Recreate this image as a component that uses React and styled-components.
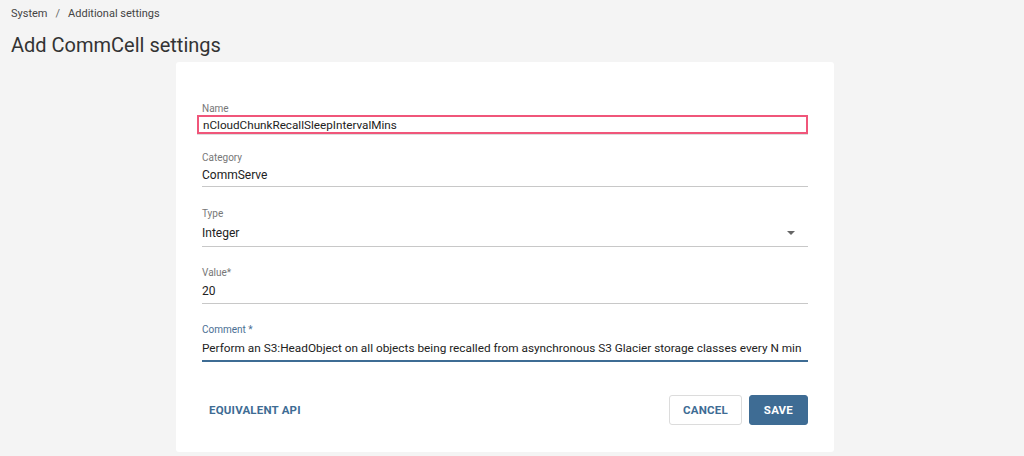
import React from "react";
import styled, { createGlobalStyle } from "styled-components";

const Global = createGlobalStyle`
  html, body { margin: 0; padding: 0; background: #f4f4f4; }
  body { font-family: Roboto, "Liberation Sans", sans-serif; color: #333; }
  * { box-sizing: border-box; }
`;

const Page = styled.div`
  width: 1024px;
  height: 456px;
  overflow: hidden;
  background: #f4f4f4;
  padding: 7px 0 0 11px;
`;

const Crumbs = styled.div`
  font-size: 11px;
  line-height: 14px;
  color: #444;
  span { margin: 0 8px; color: #666; }
`;

const Title = styled.h1`
  margin: 12px 0 0;
  font-size: 20px;
  font-weight: 400;
  line-height: 24px;
  color: #333;
`;

const Card = styled.div`
  margin: 5px 0 0 165px;
  width: 658px;
  height: 390px;
  background: #fff;
  border-radius: 3px;
  padding: 40px 26px 0 26px;
`;

const Field = styled.div`
  margin-bottom: ${p => p.$gap || 19}px;
`;

const Label = styled.div`
  font-size: 10px;
  line-height: 14px;
  color: ${p => (p.$focus ? "#4a6f93" : "#777")};
`;

const Input = styled.div`
  height: ${p => p.$h || 22}px;
  display: flex;
  align-items: center;
  justify-content: space-between;
  font-size: ${p => p.$fs || 12}px;
  color: #222;
  white-space: nowrap;
  overflow: hidden;
  border-bottom: ${p => (p.$focus ? "2px solid #3e6c94" : "1px solid #c8c8c8")};
  padding-bottom: 2px;
`;

const ErrorInput = styled.div`
  height: 19px;
  margin: -1px 0 0 -5px;
  display: flex;
  align-items: center;
  padding-left: 4px;
  font-size: 11.7px;
  color: #222;
  border: 2px solid #f0567a;
  box-shadow: 0 1px 0 #ddd;
`;

const Caret = styled.span`
  width: 0;
  height: 0;
  border-left: 4px solid transparent;
  border-right: 4px solid transparent;
  border-top: 4px solid #666;
  margin-right: 13px;
`;

const Actions = styled.div`
  display: flex;
  align-items: center;
  justify-content: space-between;
  margin-top: 33px;
`;

const TextButton = styled.button`
  background: none;
  border: none;
  padding: 0 7px;
  font-family: inherit;
  font-size: 11.5px;
  font-weight: 700;
  color: #3e6c94;
  letter-spacing: 0.2px;
`;

const Right = styled.div`
  display: flex;
  gap: 7px;
`;

const Button = styled.button`
  height: 30px;
  padding: 0 ${p => (p.$primary ? 14 : 13)}px;
  font-family: inherit;
  font-size: 11.5px;
  font-weight: 700;
  letter-spacing: 0.2px;
  border-radius: 3px;
  border: 1px solid ${p => (p.$primary ? "#3e6c94" : "#dcdcdc")};
  background: ${p => (p.$primary ? "#3e6c94" : "#fff")};
  color: ${p => (p.$primary ? "#fff" : "#3e6c94")};
`;

export default function App() {
  return (
    <Page>
      <Global />
      <Crumbs>
        System<span>/</span>Additional settings
      </Crumbs>
      <Title>Add CommCell settings</Title>
      <Card>
        <Field $gap={17}>
          <Label>Name</Label>
          <ErrorInput>nCloudChunkRecallSleepIntervalMins</ErrorInput>
        </Field>
        <Field $gap={20}>
          <Label>Category</Label>
          <Input>CommServe</Input>
        </Field>
        <Field>
          <Label>Type</Label>
          <Input $h={26}>
            Integer
            <Caret />
          </Input>
        </Field>
        <Field>
          <Label>Value*</Label>
          <Input $h={24}>20</Input>
        </Field>
        <Field>
          <Label $focus>Comment *</Label>
          <Input $h={25} $focus $fs={11.8}>
            Perform an S3:HeadObject on all objects being recalled from asynchronous S3 Glacier storage classes every N min
          </Input>
        </Field>
        <Actions>
          <TextButton>EQUIVALENT API</TextButton>
          <Right>
            <Button>CANCEL</Button>
            <Button $primary>SAVE</Button>
          </Right>
        </Actions>
      </Card>
    </Page>
  );
}
